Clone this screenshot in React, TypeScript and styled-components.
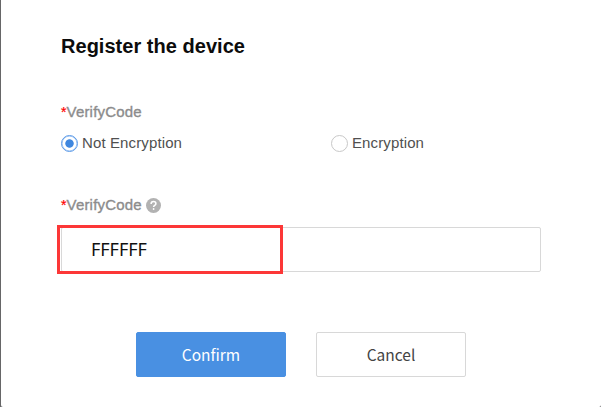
import React, { useState } from 'react';
import styled, { createGlobalStyle } from 'styled-components';

const GlobalStyle = createGlobalStyle`
  *, *::before, *::after { box-sizing: border-box; }
  body {
    margin: 0;
    background: #666667;
    font-family: "Liberation Sans", Arial, sans-serif;
  }
`;

const Dialog = styled.main`
  height: 407px;
  margin-left: 1px;
  padding: 35px 60px 0;
  background: #fff;
  border-radius: 0 0 2px 2px;
  overflow: hidden;
`;

const Title = styled.h1`
  margin: 0;
  font-size: 20px;
  line-height: 23px;
  font-weight: 700;
  letter-spacing: 0.03px;
  color: #0c0c0c;
`;

const Field = styled.section<{ $top: number }>`
  margin-top: ${(p) => p.$top}px;
`;

const Label = styled.div`
  display: flex;
  align-items: center;
  height: 18px;
  font-size: 15px;
  line-height: 18px;
  letter-spacing: 0.2px;
  color: #8c8c8c;
  -webkit-text-stroke: 0.35px #8c8c8c;
`;

const Required = styled.span`
  width: 5.5px;
  font-size: 14px;
  color: #f00;
  -webkit-text-stroke: 0.2px #f00;
`;

const HelpIcon = styled.svg`
  width: 15px;
  height: 15px;
  margin: 1px 0 0 4px;
`;

const Options = styled.div`
  display: grid;
  grid-template-columns: 270px 1fr;
  margin-top: 13px;
`;

const Option = styled.label`
  display: flex;
  align-items: center;
  height: 18px;
  font-size: 15px;
  line-height: 18px;
  letter-spacing: 0.12px;
  color: #505050;
`;

const Radio = styled.input`
  appearance: none;
  width: 17px;
  height: 17px;
  margin: 1px 4px 0 0;
  border: 1px solid #c8c8c8;
  border-radius: 50%;
  background: #fff;

  &:checked {
    border-color: #5b9ae8;
    box-shadow: inset 0 0 0 0.5px #8ebaf0;
    background: radial-gradient(circle, #3f87df 3.8px, #fff 4.6px);
  }
`;

const InputBox = styled.div`
  position: relative;
  width: 480px;
  height: 45px;
  margin-top: 13px;
`;

const Input = styled.input`
  display: block;
  width: 100%;
  height: 100%;
  padding: 0 29px 2px;
  border: 1px solid #d8d8d8;
  border-radius: 2px;
  outline: none;
  background: #fff;
  font-family: "Noto Sans", sans-serif;
  font-size: 18px;
  letter-spacing: -0.05px;
  color: #111;
`;

const Highlight = styled.div`
  position: absolute;
  top: -2px;
  left: -4px;
  width: 226px;
  height: 49px;
  border: 3px solid #fc3737;
  pointer-events: none;
`;

const Actions = styled.div`
  display: flex;
  gap: 30px;
  margin: 60px 0 0 75px;
`;

const Button = styled.button<{ $primary?: boolean }>`
  width: 150px;
  height: 45px;
  padding: 0 0 1px;
  border: 1px solid ${(p) => (p.$primary ? '#4990e2' : '#d8d8d8')};
  border-radius: 2px;
  background: ${(p) => (p.$primary ? '#4990e2' : '#fff')};
  color: ${(p) => (p.$primary ? '#fff' : '#444')};
  font-family: "Noto Sans CJK SC", sans-serif;
  font-size: 15.5px;
`;

export default function App() {
  const [mode, setMode] = useState('none');
  const [code, setCode] = useState('FFFFFF');

  return (
    <>
      <GlobalStyle />
      <Dialog>
        <Title>Register the device</Title>
        <Field $top={45}>
          <Label><Required>*</Required>VerifyCode</Label>
          <Options>
            <Option>
              <Radio type="radio" name="mode" checked={mode === 'none'} onChange={() => setMode('none')} />
              Not Encryption
            </Option>
            <Option>
              <Radio type="radio" name="mode" checked={mode === 'encrypted'} onChange={() => setMode('encrypted')} />
              Encryption
            </Option>
          </Options>
        </Field>
        <Field $top={44}>
          <Label>
            <Required>*</Required>VerifyCode
            <HelpIcon viewBox="0 0 15 15" fill="none">
              <circle cx="7.5" cy="7.5" r="7.5" fill="#b2b2b2" />
              <path d="M5.1 6c0-1.5 1-2.4 2.4-2.4s2.4.9 2.4 2.1c0 1.7-2.3 1.7-2.3 3.3" stroke="#fff" strokeWidth="1.5" />
              <circle cx="7.6" cy="11" r="0.9" fill="#fff" />
            </HelpIcon>
          </Label>
          <InputBox>
            <Input value={code} onChange={(e) => setCode(e.target.value)} />
            <Highlight />
          </InputBox>
        </Field>
        <Actions>
          <Button $primary>Confirm</Button>
          <Button>Cancel</Button>
        </Actions>
      </Dialog>
    </>
  );
}
